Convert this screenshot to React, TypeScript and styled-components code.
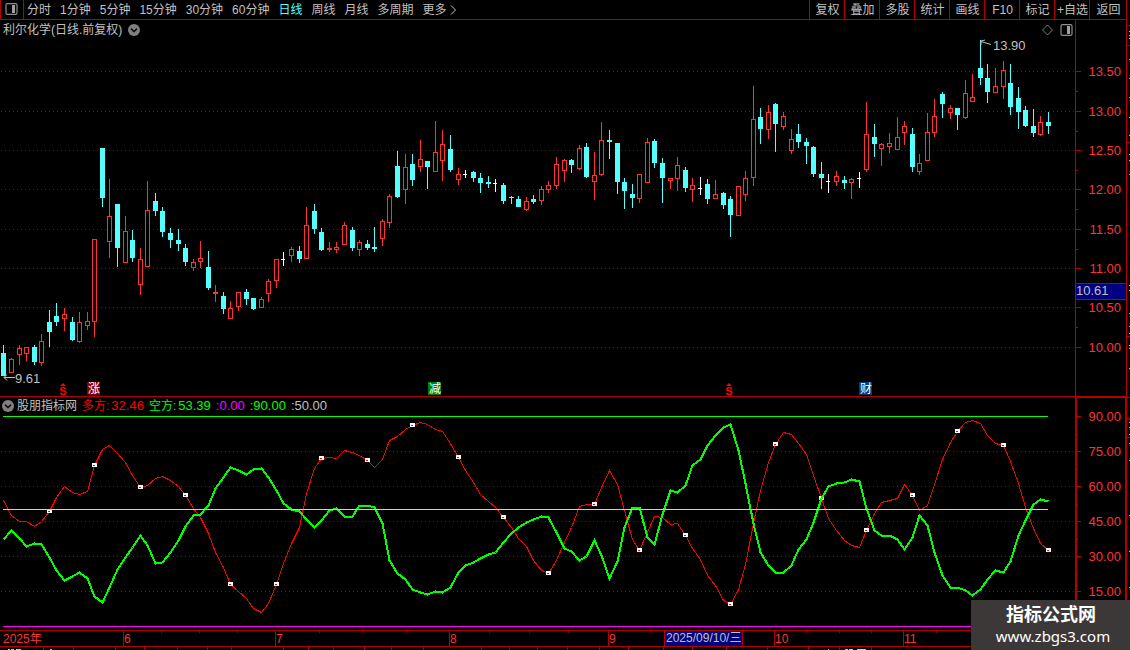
import React, { useLayoutEffect, useRef, useState } from "react";
import styled, { createGlobalStyle } from "styled-components";

const RED = "#ff3232";
const LINE = "#b40000";
const GRID = "#a00000";
const CYAN = "#54ffff";
const GREY = "#c0c0c0";
const LIME = "#00ff00";
const MAGENTA = "#ff00ff";
const SANS = '"Liberation Sans", "Noto Sans CJK SC", sans-serif';

const GlobalStyle = createGlobalStyle`
  * { box-sizing: border-box; }
  body { margin: 0; background: #000; color: ${GREY}; font: 12px/16px ${SANS}; }
  svg { display: block; }
`;

const Page = styled.div`
  position: relative;
  display: flex;
  min-height: 100vh;
  overflow: hidden;
  background: #000;
`;

const Main = styled.main`
  flex: 1;
  min-width: 0;
`;

const SideEdge = styled.aside`
  width: 4px;
  overflow: hidden;
`;

const Toolbar = styled.nav`
  display: flex;
  height: 20px;
  border-bottom: 1px solid ${LINE};
`;

const LayoutButton = styled.button`
  display: flex;
  align-items: center;
  width: 24px;
  padding: 0 0 2px 4px;
  border: solid ${LINE};
  border-width: 0 1px;
  background: none;
`;

const Periods = styled.div`
  display: flex;
  flex: 1;
  gap: 9px;
  padding-left: 3px;
`;

const PeriodButton = styled.button<{ $active?: boolean }>`
  display: flex;
  align-items: center;
  gap: 2px;
  padding: 1px 0 0;
  border: 0;
  background: none;
  color: ${(p) => (p.$active ? CYAN : GREY)};
  font: inherit;
  white-space: nowrap;
`;

const Actions = styled.div`
  display: flex;
`;

const ActionButton = styled.button<{ $last?: boolean }>`
  width: ${(p) => (p.$last ? 37 : 35)}px;
  padding: 1px 0 0 1px;
  border: 0;
  border-left: 1px solid ${LINE};
  background: none;
  color: ${GREY};
  font: inherit;
  white-space: nowrap;
`;

const Pane = styled.section`
  display: grid;
  grid-template-columns: minmax(0, 1fr) 51px;
`;

const Plot = styled.div`
  min-width: 0;
`;

const TitleRow = styled.header`
  display: flex;
  align-items: center;
  gap: 6px;
  height: 18px;
  padding: 1px 2px 0 3px;
`;

const Title = styled.h1`
  margin: 0;
  font: inherit;
`;

const TitleTools = styled.div`
  display: flex;
  gap: 7px;
  margin-left: auto;
`;

const IconButton = styled.button`
  padding: 0;
  border: 0;
  background: none;
`;

const IndicatorRow = styled.header`
  display: flex;
  align-items: center;
  gap: 5px;
  height: 18px;
  padding-left: 2px;
  border-top: 1px solid ${LINE};
`;

const IndicatorName = styled.h2`
  margin: 0 0 0 -2px;
  font: inherit;
`;

const Reading = styled.span<{ $color: string }>`
  display: flex;
  gap: 2px;
  color: ${(p) => p.$color};
`;

const ReadingValue = styled.span`
  font-size: 13px;
`;

const Watermark = styled.footer`
  position: absolute;
  right: 0;
  bottom: 0;
  width: 159px;
  height: 50px;
  padding: 4px 0 0 1px;
  background: #3c3838;
  color: #fff;
  text-align: center;
`;

const SiteName = styled.div`
  font: bold 18px/22px ${SANS};
`;

const SiteLink = styled.a`
  display: block;
  padding-left: 4px;
  color: #fff;
  font: 15px/20px "Noto Sans", sans-serif;
  text-decoration: none;
`;

type Kind = "u" | "d" | "w";
type Candle = [Kind, number, number, number, number];

/* kind (up, down, flat), high, body top, body bottom, low: pane units */
const CANDLES: Candle[] = [
  ["d", 345, 353, 376, 376], ["u", 358, 359, 373, 373], ["u", 345, 348, 355, 365], ["u", 347, 347, 354, 361],
  ["d", 345, 347, 362, 365], ["u", 334, 341, 363, 366], ["d", 310, 322, 332, 347], ["d", 303, 316, 322, 326],
  ["u", 308, 314, 319, 331], ["d", 317, 322, 340, 341], ["u", 312, 322, 342, 343], ["u", 312, 321, 326, 330],
  ["u", 239, 239, 322, 337], ["d", 148, 148, 198, 207], ["u", 179, 216, 242, 258], ["d", 204, 204, 248, 267],
  ["u", 216, 231, 263, 263], ["d", 230, 240, 258, 262], ["u", 248, 259, 285, 295], ["u", 181, 210, 267, 267],
  ["d", 193, 201, 211, 216], ["d", 207, 211, 232, 237], ["d", 228, 233, 240, 248], ["d", 229, 240, 244, 251],
  ["d", 244, 248, 262, 266], ["u", 259, 262, 268, 271], ["u", 241, 258, 262, 268], ["d", 251, 267, 288, 290],
  ["u", 285, 292, 294, 302], ["d", 292, 296, 309, 314], ["u", 301, 308, 319, 319], ["u", 292, 292, 307, 311],
  ["d", 289, 292, 299, 305], ["d", 298, 298, 309, 310], ["u", 297, 299, 308, 308], ["u", 279, 281, 294, 302],
  ["u", 259, 259, 281, 288], ["w", 252, 259, 260, 266], ["u", 247, 249, 256, 262], ["d", 246, 251, 259, 263],
  ["u", 207, 225, 259, 259], ["d", 204, 211, 229, 234], ["d", 228, 232, 250, 251], ["u", 242, 248, 250, 252],
  ["u", 242, 247, 250, 253], ["u", 222, 225, 245, 245], ["d", 227, 230, 248, 251], ["u", 240, 242, 250, 256],
  ["d", 240, 244, 248, 250], ["d", 227, 247, 249, 252], ["u", 219, 221, 239, 246], ["u", 194, 196, 223, 228],
  ["d", 151, 166, 197, 198], ["u", 154, 167, 190, 204], ["d", 154, 164, 180, 186], ["u", 140, 159, 167, 172],
  ["d", 161, 161, 167, 189], ["u", 121, 152, 172, 172], ["u", 130, 144, 161, 181], ["d", 135, 149, 170, 172],
  ["u", 168, 174, 180, 185], ["w", 170, 174, 175, 178], ["d", 171, 172, 178, 182], ["d", 173, 178, 183, 193],
  ["d", 176, 182, 184, 188], ["w", 179, 183, 184, 192], ["d", 183, 185, 201, 204], ["d", 196, 197, 198, 204],
  ["d", 196, 199, 207, 207], ["u", 197, 201, 210, 211], ["d", 195, 199, 202, 204], ["u", 186, 189, 201, 205],
  ["u", 181, 185, 190, 193], ["u", 157, 164, 186, 189], ["u", 159, 160, 171, 182], ["d", 159, 160, 165, 173],
  ["u", 145, 148, 169, 170], ["d", 143, 147, 177, 178], ["u", 152, 175, 182, 200], ["u", 122, 140, 175, 176],
  ["d", 130, 140, 142, 159], ["d", 143, 143, 182, 194], ["d", 178, 182, 191, 209], ["d", 184, 194, 198, 208],
  ["u", 174, 174, 199, 203], ["u", 138, 142, 183, 183], ["d", 139, 141, 163, 168], ["d", 158, 163, 178, 203],
  ["u", 178, 178, 181, 189], ["u", 157, 165, 179, 191], ["d", 167, 170, 188, 192], ["u", 178, 185, 190, 202],
  ["w", 177, 188, 189, 195], ["d", 179, 184, 199, 204], ["u", 180, 194, 199, 199], ["d", 192, 193, 205, 209],
  ["d", 196, 199, 215, 237], ["u", 186, 186, 216, 216], ["u", 171, 178, 195, 201], ["u", 86, 119, 178, 186],
  ["d", 108, 117, 129, 144], ["u", 105, 112, 130, 139], ["d", 103, 104, 124, 152], ["u", 112, 116, 127, 130],
  ["u", 129, 139, 151, 154], ["d", 124, 134, 142, 148], ["d", 138, 142, 146, 164], ["d", 146, 147, 174, 177],
  ["d", 162, 174, 178, 189], ["w", 174, 181, 182, 193], ["u", 171, 176, 182, 186], ["d", 176, 180, 183, 189],
  ["u", 178, 179, 183, 199], ["w", 172, 178, 179, 188], ["u", 102, 134, 170, 172], ["d", 124, 137, 144, 157],
  ["u", 143, 144, 149, 166], ["u", 133, 143, 147, 153], ["u", 117, 137, 150, 150], ["u", 121, 126, 133, 145],
  ["d", 128, 134, 167, 172], ["u", 154, 163, 172, 175], ["u", 113, 132, 161, 161], ["u", 99, 116, 133, 137],
  ["d", 92, 94, 104, 118], ["u", 105, 108, 113, 119], ["d", 108, 108, 115, 130], ["u", 80, 93, 118, 119],
  ["u", 74, 97, 102, 102], ["d", 40, 68, 78, 85], ["d", 64, 78, 92, 103], ["u", 68, 86, 93, 93],
  ["u", 61, 70, 87, 99], ["d", 64, 83, 107, 115], ["d", 87, 98, 112, 129], ["d", 106, 110, 126, 127],
  ["d", 109, 126, 133, 137], ["u", 116, 122, 135, 136], ["d", 112, 122, 126, 134],
];

const BULL = [
  500, 515, 521, 521, 526, 521, 511, 497, 486, 492, 494, 491, 465, 449, 445, 453, 462, 475, 487, 485,
  478, 476, 480, 486, 495, 508, 517, 533, 552, 567, 584, 591, 598, 608, 612, 603, 584, 563, 543, 527,
  493, 468, 458, 457, 458, 450, 452, 455, 460, 467, 459, 440, 436, 429, 425, 422, 424, 429, 431, 443,
  457, 470, 482, 494, 501, 507, 517, 527, 538, 546, 560, 570, 573, 560, 542, 527, 506, 504, 504, 487,
  470, 484, 510, 539, 550, 532, 516, 517, 524, 523, 535, 548, 559, 575, 585, 600, 604, 589, 564, 523,
  490, 462, 444, 432, 434, 443, 454, 475, 498, 518, 530, 540, 545, 547, 530, 513, 502, 500, 498, 484,
  495, 510, 505, 484, 459, 442, 431, 422, 420, 423, 435, 443, 445, 461, 483, 507, 528, 543, 550,
];

const BEAR = [
  539, 530, 538, 546, 543, 544, 557, 570, 580, 576, 572, 578, 596, 602, 587, 569, 557, 547, 535, 545,
  563, 562, 552, 540, 526, 515, 514, 505, 488, 477, 467, 470, 474, 469, 468, 477, 490, 503, 509, 511,
  519, 527, 520, 510, 508, 516, 516, 505, 505, 507, 523, 560, 573, 579, 589, 592, 594, 591, 592, 587,
  572, 565, 562, 558, 554, 552, 542, 533, 527, 522, 519, 516, 517, 532, 548, 551, 560, 556, 540, 555,
  578, 561, 527, 507, 507, 537, 544, 514, 490, 492, 485, 465, 459, 445, 435, 427, 424, 450, 483, 523,
  552, 565, 572, 572, 565, 549, 539, 522, 498, 486, 483, 482, 479, 481, 508, 530, 535, 535, 539, 549,
  537, 515, 525, 552, 575, 587, 587, 590, 595, 589, 579, 570, 572, 561, 535, 520, 504, 499, 501,
];

const PRICE_LEVELS: [number, string][] = [
  [71, "13.50"], [111, "13.00"], [150, "12.50"], [189, "12.00"],
  [229, "11.50"], [268, "11.00"], [307, "10.50"], [347, "10.00"],
];

const INDEX_LEVELS: [number, string][] = [
  [416, "90.00"], [451, "75.00"], [486, "60.00"], [521, "45.00"], [556, "30.00"], [591, "15.00"],
];

const EVENTS = [
  { at: 12, label: "涨", color: "#800000" },
  { at: 57, label: "减", color: "#008000" },
  { at: 114, label: "财", color: "#003c78" },
];

const PERIODS = ["分时", "1分钟", "5分钟", "15分钟", "30分钟", "60分钟", "日线", "周线", "月线", "多周期"];
const ACTIONS = ["复权", "叠加", "多股", "统计", "画线", "F10", "标记", "+自选", "返回"];

const MONTHS: [number, string][] = [[123, "6"], [275, "7"], [449, "8"], [608, "9"], [774, "10"], [903, "11"]];
const WEEK_TICKS = [161, 199, 237, 319, 362, 406, 489, 529, 568, 650, 806, 839, 871, 936];
const STATUS_TICKS = [
  43, 73, 115, 144, 177, 207, 231, 283, 308, 333, 364, 391, 423, 481, 509, 537, 567, 599, 628, 663, 692, 726,
  767, 808, 839, 871,
];
const EDGE_TICKS = [25, 45, 142, 336, 397, 418, 437];
const EDGE_DOTS = [
  31, 35, 38, 59, 78, 97, 117, 135, 154, 160, 174, 285, 290, 313, 326, 333, 345, 348, 368, 422, 427, 434, 443,
  460, 515, 551, 587,
];

const useWidth = () => {
  const ref = useRef<HTMLDivElement>(null);
  const [width, setWidth] = useState(1075);
  useLayoutEffect(() => {
    const node = ref.current;
    if (!node) return;
    const measure = () => setWidth(node.clientWidth);
    measure();
    const observer = new ResizeObserver(measure);
    observer.observe(node);
    return () => observer.disconnect();
  }, []);
  return [ref, width] as const;
};

const scaleX = (width: number) => (i: number) =>
  Math.round(3.4 + (i * (width - 30.4)) / (CANDLES.length - 1));

const ChevronBadge = () => (
  <svg width="12" height="12" viewBox="0 0 12 12">
    <circle cx="6" cy="6" r="6" fill="#808080" />
    <path d="M3 4.6 6 7.6 9 4.6" fill="none" stroke="#111" strokeWidth="1.5" />
  </svg>
);

const PanelIcon = () => (
  <svg width="13" height="12" viewBox="0 0 13 12">
    <rect x="1" y=".6" width="11" height="10.8" rx="1.5" fill="none" stroke="#909090" strokeWidth="1.2" />
    <rect x="7" y="2" width="3" height="8" fill="#a0a0a0" />
  </svg>
);

const DiamondIcon = () => (
  <svg width="11" height="12" viewBox="0 0 11 12">
    <path d="M5.5 1 10.5 6 5.5 11 .5 6Z" fill="none" stroke="#808080" />
  </svg>
);

const GridRows = ({ levels, width }: { levels: number[]; width: number }) => (
  <g stroke={GRID} strokeDasharray="1 3">
    {levels.map((y) => (
      <line key={y} x1="1" x2={width} y1={y + 0.5} y2={y + 0.5} />
    ))}
  </g>
);

const CandleMark = ({ x, candle }: { x: number; candle: Candle }) => {
  const [kind, high, top, bottom, low] = candle;
  const color = kind === "u" ? RED : kind === "d" ? CYAN : "#ffffff";
  const bodyWidth = kind === "w" ? 4 : 5;
  return (
    <g fill={color}>
      <rect x={x} y={high} width="1" height={low - high} />
      <rect x={x - 2} y={top} width={bodyWidth} height={bottom - top} />
      {kind === "u" && bottom - top > 2 && (
        <rect x={x - 1} y={top + 1} width="3" height={bottom - top - 2} fill="#000" />
      )}
    </g>
  );
};

const DividendMark = ({ x }: { x: number }) => (
  <g fill="#ff0000">
    <path d={`M${x} 383l3 3h-6z`} />
    <text x={x} y="395" fontSize="11" fontWeight="bold" textAnchor="middle">S</text>
  </g>
);

const PriceChart = ({ width }: { width: number }) => {
  const x = scaleX(width);
  const peak = x(129);
  return (
    <svg width="100%" height="358" viewBox={`0 38 ${width} 358`} role="img" aria-label="日线">
      <g shapeRendering="crispEdges">
        <GridRows levels={PRICE_LEVELS.map((l) => l[0])} width={width} />
        {CANDLES.map((c, i) => (
          <CandleMark key={i} x={x(i)} candle={c} />
        ))}
      </g>
      <path d={`M${peak + 11} 44.5 ${peak + 1} 41.5M${peak + 1} 45v-4l4-1`} fill="none" stroke={GREY} />
      <path d="M15 377.5H4M7 374.5 4 377.5 7 380.5" fill="none" stroke={GREY} />
      <g fill={GREY} fontSize="13">
        <text x={peak + 13} y="50">13.90</text>
        <text x="15" y="383">9.61</text>
      </g>
      <DividendMark x={x(8) - 1} />
      <DividendMark x={x(96) - 1} />
      {EVENTS.map((e) => (
        <g key={e.at}>
          <rect x={x(e.at) - 7} y="382" width="13" height="13" fill={e.color} />
          <text x={x(e.at) - 6} y="393" fontSize="12" fill="#fff">{e.label}</text>
        </g>
      ))}
    </svg>
  );
};

const IndicatorChart = ({ width }: { width: number }) => {
  const x = scaleX(width);
  const points = (values: number[]) => values.map((y, i) => `${x(i) + 0.5},${y + 0.5}`).join(" ");
  const end = x(138);
  return (
    <svg width="100%" height="216" viewBox={`0 414 ${width} 216`} role="img" aria-label="股朋指标网">
      <g shapeRendering="crispEdges" fill="none">
        <GridRows levels={INDEX_LEVELS.slice(1).map((l) => l[0])} width={width} />
        <polyline points={points(BULL)} stroke="#ff0000" />
        {BULL.map((y, i) =>
          i > 0 && i % 6 === 0 ? (
            <g key={i}>
              <rect x={x(i) - 2} y={y - 2} width="5" height="4" fill="#fff" />
              <rect x={x(i) - 1} y={y} width="2" height="1" fill="#ff0000" />
            </g>
          ) : null
        )}
        <polyline points={points(BEAR)} stroke={LIME} strokeWidth="2" />
        <line x1="3" x2={end} y1="416.5" y2="416.5" stroke={LIME} />
        <line x1="3" x2={end} y1="509.5" y2="509.5" stroke="#d0d0d0" />
        <line x1="3" x2={end} y1="626.5" y2="626.5" stroke={MAGENTA} />
      </g>
    </svg>
  );
};

const AxisLabels = ({ levels }: { levels: [number, string][] }) => (
  <g fill={RED} fontSize="13" textAnchor="end">
    {levels.map(([y, label]) => (
      <text key={label} x="46" y={y + 5}>{label}</text>
    ))}
  </g>
);

const AxisTicks = ({ levels, step }: { levels: [number, string][]; step: number }) => (
  <g fill={LINE} shapeRendering="crispEdges">
    {levels.map(([y]) => (
      <React.Fragment key={y}>
        <rect x="0" y={y} width="6" height="1" />
        <rect x="0" y={y + step} width="3" height="1" />
      </React.Fragment>
    ))}
  </g>
);

const PriceAxis = () => (
  <svg width="51" height="376" viewBox="0 20 51 376">
    <rect x="0" y="20" width="1" height="376" fill={LINE} />
    <AxisTicks levels={PRICE_LEVELS.slice(0, 7)} step={20} />
    <rect x="0" y="347" width="6" height="1" fill={LINE} />
    <AxisLabels levels={PRICE_LEVELS} />
    <rect x="1" y="283" width="50" height="17" fill={LINE} />
    <rect x="1" y="284" width="50" height="15" fill="#000080" />
    <text x="1" y="295" fontSize="13" fill={GREY}>10.61</text>
  </svg>
);

const IndicatorAxis = () => (
  <svg width="51" height="234" viewBox="0 396 51 234">
    <rect x="0" y="396" width="51" height="2" fill={LINE} />
    <rect x="0" y="396" width="2" height="234" fill={LINE} />
    <rect x="50" y="396" width="1" height="234" fill={LINE} />
    <AxisTicks levels={INDEX_LEVELS} step={18} />
    <AxisLabels levels={INDEX_LEVELS} />
  </svg>
);

const DateAxis = ({ width }: { width: number }) => {
  const at = (p: number) => Math.round((p * width) / 1075);
  const box = at(664);
  return (
    <svg width="100%" height="20" viewBox={`0 630 ${width + 51} 20`}>
      <g fill={LINE} shapeRendering="crispEdges">
        <rect x="0" y="630" width={width + 51} height="1" />
        <rect x="0" y="646" width={width + 51} height="1" />
        {MONTHS.map(([p]) => (
          <rect key={p} x={at(p)} y="630" width="1" height="16" />
        ))}
        {WEEK_TICKS.map((p) => (
          <rect key={p} x={at(p)} y="631" width="1" height="2" />
        ))}
        {STATUS_TICKS.map((p) => (
          <rect key={p} x={at(p)} y="647" width="1" height="3" />
        ))}
        <rect x={box} y="631" width="79" height="15" />
        <rect x={box + 1} y="631" width="77" height="15" fill="#000080" />
        <g fill={GREY}>
          <rect x="8" y="649" width="2" height="1" />
          <rect x="11" y="649" width="3" height="1" />
          <rect x="16" y="649" width="5" height="1" />
          <rect x="50" y="649" width="2" height="1" />
          <rect x={at(828)} y="649" width="1" height="1" />
          <rect x={at(845)} y="649" width="3" height="1" />
        </g>
        <rect x={at(849)} y="649" width="4" height="1" fill={CYAN} />
        <rect x={at(857)} y="649" width="9" height="1" fill={CYAN} />
      </g>
      <g fill={RED} fontSize="12">
        <text x="3" y="643">2025年</text>
        {MONTHS.map(([p, label]) => (
          <text key={label} x={at(p) + 1} y="643">{label}</text>
        ))}
      </g>
      <text x={box + 2} y="642" fontSize="12" fill={GREY}>2025/09/10/三</text>
    </svg>
  );
};

const Edge = () => (
  <svg width="4" height="650" viewBox="0 0 4 650" shapeRendering="crispEdges">
    <rect x="0" y="0" width="1" height="650" fill={LINE} />
    {EDGE_TICKS.map((y) => (
      <rect key={y} x="1" y={y} width="3" height="1" fill={LINE} />
    ))}
    {EDGE_DOTS.map((y) => (
      <rect key={y} x="3" y={y} width="1" height="1" fill={GREY} />
    ))}
  </svg>
);

export default function App() {
  const [plotRef, width] = useWidth();
  return (
    <>
      <GlobalStyle />
      <Page>
        <Main>
          <Toolbar>
            <LayoutButton aria-label="布局"><PanelIcon /></LayoutButton>
            <Periods>
              {PERIODS.map((p) => (
                <PeriodButton key={p} $active={p === "日线"}>{p}</PeriodButton>
              ))}
              <PeriodButton>
                更多
                <svg width="8" height="10" viewBox="0 0 8 10">
                  <path d="M2 .5 6.500 5 2 9.500" fill="none" stroke={GREY} />
                </svg>
              </PeriodButton>
            </Periods>
            <Actions>
              {ACTIONS.map((a, i) => (
                <ActionButton key={a} $last={i === ACTIONS.length - 1}>{a}</ActionButton>
              ))}
            </Actions>
          </Toolbar>

          <Pane>
            <Plot ref={plotRef}>
              <TitleRow>
                <Title>利尔化学(日线.前复权)</Title>
                <IconButton aria-label="选择股票"><ChevronBadge /></IconButton>
                <TitleTools>
                  <IconButton aria-label="标记"><DiamondIcon /></IconButton>
                  <IconButton aria-label="侧栏"><PanelIcon /></IconButton>
                </TitleTools>
              </TitleRow>
              <PriceChart width={width} />
            </Plot>
            <PriceAxis />
          </Pane>

          <Pane>
            <Plot>
              <IndicatorRow>
                <IconButton aria-label="选择指标"><ChevronBadge /></IconButton>
                <IndicatorName>股朋指标网</IndicatorName>
                <Reading $color="#ff0000">多方:<ReadingValue>32.46</ReadingValue></Reading>
                <Reading $color={LIME}>空方:<ReadingValue>53.39</ReadingValue></Reading>
                <Reading $color={MAGENTA}><ReadingValue>:0.00</ReadingValue></Reading>
                <Reading $color={LIME}><ReadingValue>:90.00</ReadingValue></Reading>
                <Reading $color={GREY}><ReadingValue>:50.00</ReadingValue></Reading>
              </IndicatorRow>
              <IndicatorChart width={width} />
            </Plot>
            <IndicatorAxis />
          </Pane>

          <DateAxis width={width} />
        </Main>
        <SideEdge><Edge /></SideEdge>
        <Watermark>
          <SiteName>指标公式网</SiteName>
          <SiteLink href="#">www.zbgs3.com</SiteLink>
        </Watermark>
      </Page>
    </>
  );
}
